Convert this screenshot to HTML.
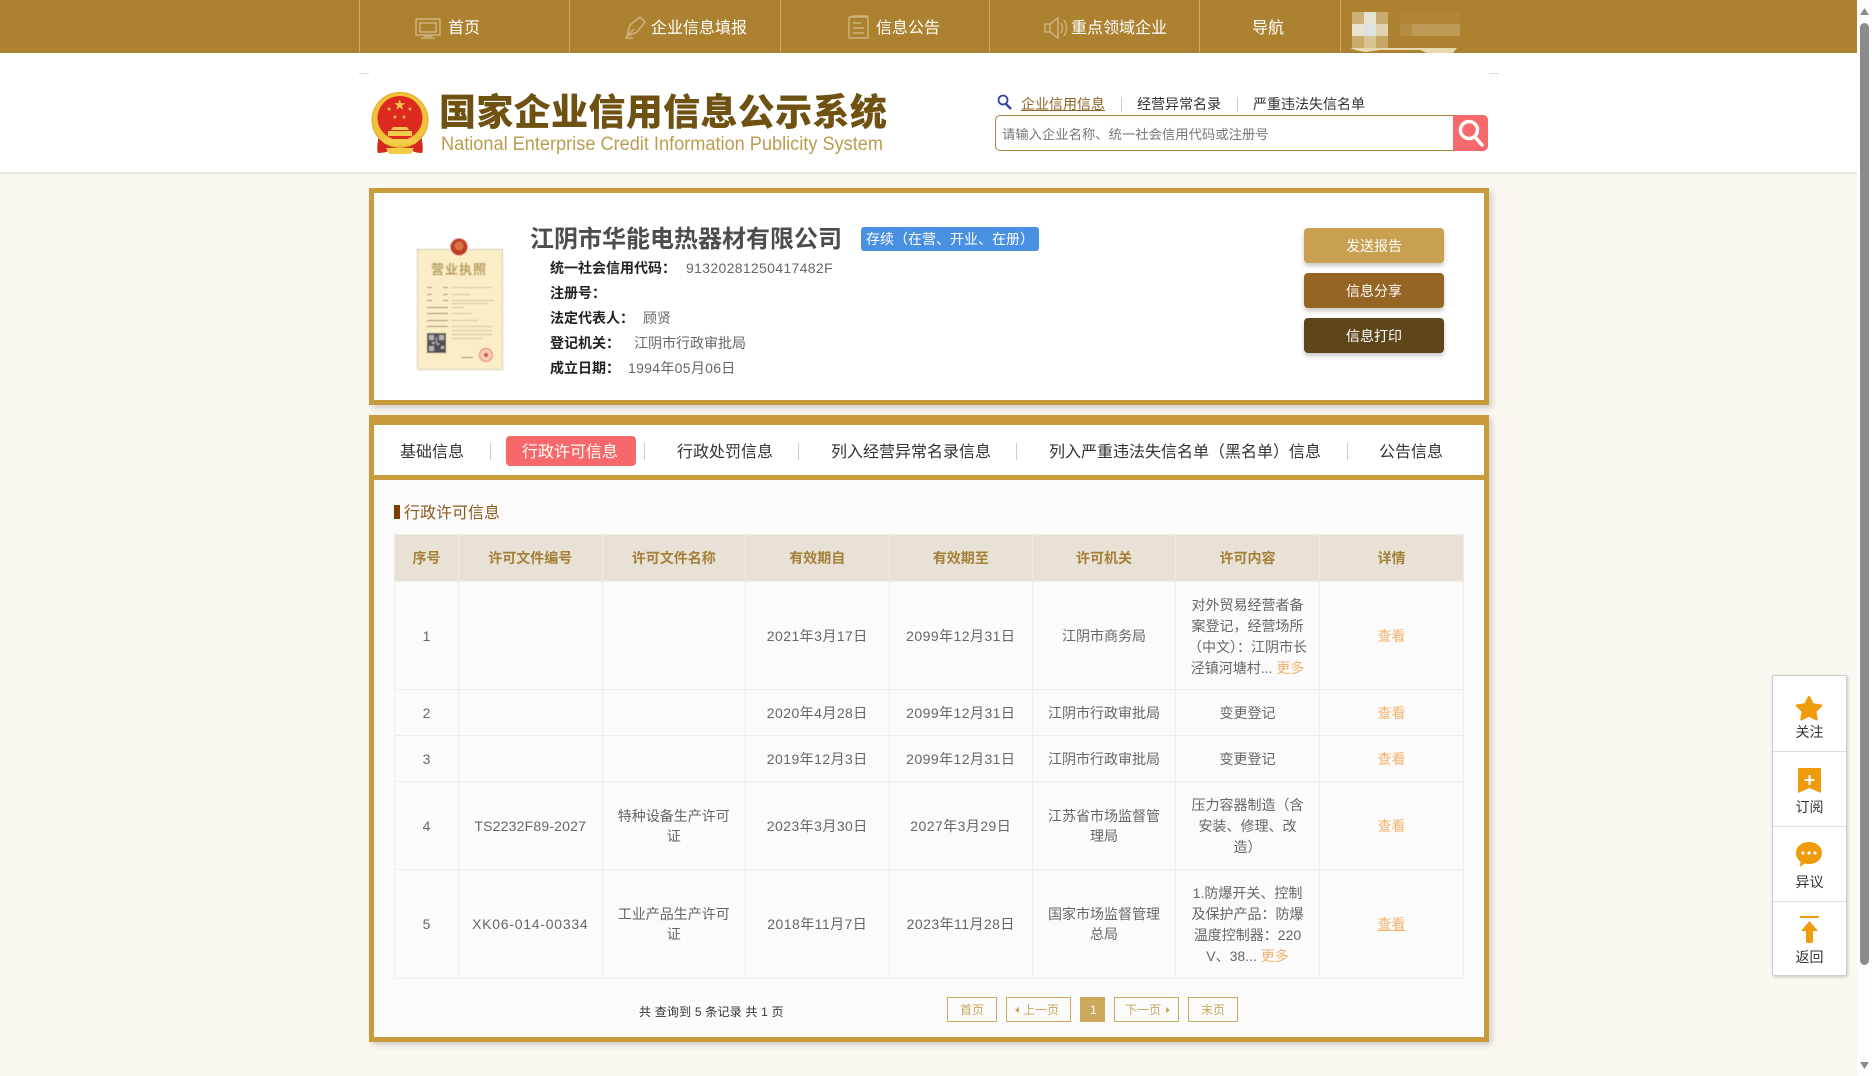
<!DOCTYPE html>
<html lang="zh-CN"><head><meta charset="utf-8"><title>国家企业信用信息公示系统</title>
<style>
html,body{margin:0;padding:0;width:1872px;height:1076px;overflow:hidden;background:#fbf8f1}
body{position:relative;font-family:"Liberation Sans","Noto Sans CJK SC",sans-serif;font-size:14px;color:#666}
.t{position:absolute;white-space:nowrap;line-height:20px}
.a{position:absolute}
.nav{left:0;top:0;width:1857px;height:53px;background:#ac8130}
.nv{color:#fff;font-size:16px;top:19px}
.ns{top:0;width:1px;height:53px;background:#c9ab6a}
.hd{left:0;top:53px;width:1857px;height:119px;background:#fff;border-bottom:2px solid #e6e4e0}
.panel{box-sizing:border-box;border:5px solid #c89b3c;box-shadow:3px 3px 6px rgba(0,0,0,.18)}
.btn{left:1304px;width:140px;height:35px;line-height:37px;border-radius:4px;color:#fff;text-align:center;box-shadow:0 3px 5px rgba(0,0,0,.22)}
.lb{left:550px;font-weight:700;color:#222}
.tab{font-size:16px;color:#333;top:443px}
.sp{width:1px;height:17px;top:443px;background:#ccc}
table{position:absolute;left:394px;top:534px;width:1069px;border-collapse:collapse;table-layout:fixed;background:#fbfbfb}
td,th{border:1px solid #eee;padding:0 12px;text-align:center;vertical-align:middle;line-height:20px;font-weight:400;color:#666}
th{background:#e8e2d6;color:#a47f36;font-weight:700;border-color:#f1ede5}
td div{line-height:21px;position:relative;top:1px}
.d{letter-spacing:.45px}
.o{color:#f4b26c}
.pg{box-sizing:border-box;top:997px;height:25px;line-height:25px;border:1px solid #cdaa5e;color:#c9a55c;font-size:12px;text-align:center;white-space:nowrap}
.sb{color:#333;width:75px;text-align:center;left:1772px}
</style></head><body>
<div class="a nav"></div>
<div class="a ns" style="left:359px"></div><div class="a ns" style="left:569px"></div><div class="a ns" style="left:780px"></div><div class="a ns" style="left:989px"></div><div class="a ns" style="left:1199px"></div><div class="a ns" style="left:1340px"></div>
<div class="t nv" style="left:448px">首页</div>
<div class="t nv" style="left:651px">企业信息填报</div>
<div class="t nv" style="left:876px">信息公告</div>
<div class="t nv" style="left:1071px">重点领域企业</div>
<div class="t nv" style="left:1252px">导航</div>

<div class="a" style="left:1352px;top:12px;width:12px;height:12px;background:#cbb07a"></div><div class="a" style="left:1364px;top:12px;width:12px;height:12px;background:#e8e2d0"></div><div class="a" style="left:1376px;top:12px;width:12px;height:12px;background:#c9ab6e"></div>
<div class="a" style="left:1352px;top:24px;width:12px;height:12px;background:#ebe3d0"></div><div class="a" style="left:1364px;top:24px;width:12px;height:12px;background:#dfe0e0"></div><div class="a" style="left:1376px;top:24px;width:12px;height:12px;background:#e3d2af"></div>
<div class="a" style="left:1352px;top:36px;width:12px;height:12px;background:#c9ab6e"></div><div class="a" style="left:1364px;top:36px;width:12px;height:12px;background:#d8c392"></div><div class="a" style="left:1376px;top:36px;width:12px;height:12px;background:#c6a665"></div>
<div class="a" style="left:1400px;top:12px;width:60px;height:12px;background:#b18736"></div>
<div class="a" style="left:1400px;top:24px;width:12px;height:12px;background:#b58d42"></div><div class="a" style="left:1412px;top:24px;width:48px;height:12px;background:#bd9a55"></div>

<div class="a hd"></div>
<div class="a" style="left:359px;top:73px;width:10px;height:1px;background:#ddd"></div>
<div class="a" style="left:1489px;top:73px;width:10px;height:1px;background:#ddd"></div>

<div class="t" style="left:439px;top:93px;line-height:40px;font-size:37px;font-weight:900;letter-spacing:.35px;color:#6f5212">国家企业信用信息公示系统</div>

<div class="t" style="left:1021px;top:94px;color:#8a6426;text-decoration:underline">企业信用信息</div>
<div class="a" style="left:1121px;top:97px;width:1px;height:15px;background:#ccc"></div>
<div class="t" style="left:1137px;top:94px;color:#333">经营异常名录</div>
<div class="a" style="left:1237px;top:97px;width:1px;height:15px;background:#ccc"></div>
<div class="t" style="left:1253px;top:94px;color:#333">严重违法失信名单</div>
<div class="a" style="left:995px;top:115px;width:493px;height:36px;box-sizing:border-box;border:1px solid #a98235;border-radius:5px;background:#fff"></div>
<div class="t" style="left:1002px;top:125px;font-size:13.33px;color:#777">请输入企业名称、统一社会信用代码或注册号</div>
<div class="a" style="left:1453px;top:115px;width:35px;height:36px;background:#f7696b;border-radius:0 5px 5px 0"></div>

<div class="a panel" style="left:369px;top:188px;width:1120px;height:217px;background:#fff"></div>
<div class="t" style="left:530px;top:225px;line-height:30px;font-size:24px;font-weight:700;color:#4d4d4d">江阴市华能电热器材有限公司</div>
<div class="a" style="left:861px;top:227px;width:178px;height:24px;background:#4a90e2;border-radius:3px"></div>
<div class="t" style="left:866px;top:229px;color:#fff">存续（在营、开业、在册）</div>
<div class="t lb" style="top:258px">统一社会信用代码：</div><div class="t" style="left:686px;top:258px;letter-spacing:.33px">91320281250417482F</div>
<div class="t lb" style="top:283px">注册号：</div>
<div class="t lb" style="top:308px">法定代表人：</div><div class="t" style="left:643px;top:308px">顾贤</div>
<div class="t lb" style="top:333px">登记机关：</div><div class="t" style="left:634px;top:333px">江阴市行政审批局</div>
<div class="t lb" style="top:358px">成立日期：</div><div class="t" style="left:628px;top:358px;letter-spacing:.3px">1994年05月06日</div>

<div class="a btn" style="top:228px;background:#c99f50">发送报告</div>
<div class="a btn" style="top:273px;background:#956524">信息分享</div>
<div class="a btn" style="top:318px;background:#5f451a">信息打印</div>

<div class="a panel" style="left:369px;top:415px;width:1120px;height:627px;border-top-width:10px;background:#fbfbfb"></div>
<div class="a" style="left:374px;top:425px;width:1110px;height:50px;background:#fff"></div>
<div class="a" style="left:374px;top:475px;width:1110px;height:5px;background:#c89b3c"></div>
<div class="t tab" style="left:400px">基础信息</div><div class="a sp" style="left:490px"></div>
<div class="a" style="left:506px;top:436px;width:130px;height:30px;background:#f7686a;border-radius:4px"></div>
<div class="t tab" style="left:522px;color:#fff">行政许可信息</div><div class="a sp" style="left:644px"></div>
<div class="t tab" style="left:677px">行政处罚信息</div><div class="a sp" style="left:798px"></div>
<div class="t tab" style="left:831px">列入经营异常名录信息</div><div class="a sp" style="left:1016px"></div>
<div class="t tab" style="left:1049px">列入严重违法失信名单（黑名单）信息</div><div class="a sp" style="left:1347px"></div>
<div class="t tab" style="left:1379px">公告信息</div>

<div class="a" style="left:394px;top:505px;width:6px;height:14px;background:#7f3f00"></div>
<div class="t" style="left:404px;top:504px;font-size:16px;color:#8b5a1f">行政许可信息</div>

<table>
<colgroup><col style="width:64px"><col style="width:143.5px"><col style="width:143.5px"><col style="width:143.5px"><col style="width:143.5px"><col style="width:143px"><col style="width:144px"><col style="width:144px"></colgroup>
<tr style="height:47px"><th>序号</th><th>许可文件编号</th><th>许可文件名称</th><th>有效期自</th><th>有效期至</th><th>许可机关</th><th>许可内容</th><th>详情</th></tr>
<tr style="height:108px"><td>1</td><td></td><td></td><td class="d">2021年3月17日</td><td class="d">2099年12月31日</td><td>江阴市商务局</td><td><div>对外贸易经营者备<br>案登记，经营场所<br>（中文）：江阴市长<br>泾镇河塘村... <span class="o">更多</span></div></td><td class="o">查看</td></tr>
<tr style="height:46px"><td>2</td><td></td><td></td><td class="d">2020年4月28日</td><td class="d">2099年12月31日</td><td>江阴市行政审批局</td><td>变更登记</td><td class="o">查看</td></tr>
<tr style="height:46px"><td>3</td><td></td><td></td><td class="d">2019年12月3日</td><td class="d">2099年12月31日</td><td>江阴市行政审批局</td><td>变更登记</td><td class="o">查看</td></tr>
<tr style="height:88px"><td>4</td><td style="padding:0;letter-spacing:.2px">TS2232F89-2027</td><td>特种设备生产许可<br>证</td><td class="d">2023年3月30日</td><td class="d">2027年3月29日</td><td>江苏省市场监督管<br>理局</td><td><div>压力容器制造（含<br>安装、修理、改<br>造）</div></td><td class="o">查看</td></tr>
<tr style="height:109px"><td>5</td><td style="padding:0;letter-spacing:.75px">XK06-014-00334</td><td>工业产品生产许可<br>证</td><td class="d">2018年11月7日</td><td class="d">2023年11月28日</td><td>国家市场监督管理<br>总局</td><td><div>1.防爆开关、控制<br>及保护产品：防爆<br>温度控制器：220<br>V、38... <span class="o">更多</span></div></td><td class="o" style="text-decoration:underline">查看</td></tr>
</table>

<div class="t" style="left:639px;top:1002px;font-size:12px;letter-spacing:.2px;color:#333">共 查询到 5 条记录 共 1 页</div>
<div class="a pg" style="left:947px;width:50px">首页</div>
<div class="a pg" style="left:1006px;width:65px;text-align:left;padding-left:16px">上一页</div>
<div class="a pg" style="left:1080px;width:25px;background:#cda95c;color:#fff;padding-left:2px">1</div>
<div class="a pg" style="left:1114px;width:65px;text-align:left;padding-left:10px">下一页</div>
<div class="a pg" style="left:1188px;width:50px">末页</div>

<div class="a" style="left:1772px;top:675px;width:75px;height:301px;box-sizing:border-box;background:#fff;border:1px solid #ccc;border-radius:2px;box-shadow:1px 1px 3px rgba(0,0,0,.2)"></div>
<div class="a" style="left:1773px;top:751px;width:73px;height:1px;background:#ddd"></div>
<div class="a" style="left:1773px;top:826px;width:73px;height:1px;background:#ddd"></div>
<div class="a" style="left:1773px;top:901px;width:73px;height:1px;background:#ddd"></div>
<div class="t sb" style="top:722px">关注</div>
<div class="t sb" style="top:797px">订阅</div>
<div class="t sb" style="top:872px">异议</div>
<div class="t sb" style="top:947px">返回</div>

<div class="a" style="left:1857px;top:0;width:15px;height:1076px;background:#fdfdfd"></div>
<div class="a" style="left:1860px;top:23px;width:9px;height:942px;background:#8b8b8b;border-radius:5px"></div>

<svg class="a" style="left:0;top:0" width="1872" height="1076" viewBox="0 0 1872 1076">
<defs><polygon id="s" points="0,-1 .2245,-.309 .951,-.309 .363,.118 .588,.809 0,.382 -.588,.809 -.363,.118 -.951,-.309 -.2245,-.309"/><filter id="b" x="-5%" y="-5%" width="110%" height="110%"><feGaussianBlur stdDeviation=".45"/></filter></defs>
<!-- nav icons -->
<g fill="none" stroke="#cdb27a" stroke-width="1.5">
<rect x="416" y="19" width="24" height="16" rx="1"/><rect x="420" y="23" width="16" height="9"/><path d="M424 36h8M421 38h14"/>
<path d="M627 36l3-11 10-8 5 5-8 10z M627 36l7-7M640 17l5 5M625 38h8"/>
<rect x="849" y="17" width="19" height="21" rx="1"/><path d="M853 17v-1h15M853 23h8M853 28h11M853 33h11"/>
<path d="M1045 24h5l8-6v20l-8-6h-5zM1050 24v8M1061 23q3 5 0 10M1064 20q5 8 0 16"/>
</g>
<path d="M1350 48h107l-4 5h-26l-7-3h-40l-14 2q-10-1-16-4z" fill="#e8d8b0"/>
<!-- emblem -->
<path d="M379 135q-3 14-1 18 10 0 14-5l8 3 8-3q5 5 14 5 2-4-1-18z" fill="#d22a1e"/>
<ellipse cx="400" cy="120" rx="28" ry="27.5" fill="#f2c23a" stroke="#dca72a"/>
<ellipse cx="400" cy="118" rx="22.500" ry="22" fill="#dc2a20"/>
<g fill="#f5cc4a"><use href="#s" transform="translate(399.7 105) scale(5.8)"/><use href="#s" transform="translate(389 109) scale(2.4)"/><use href="#s" transform="translate(410 109) scale(2.4)"/><use href="#s" transform="translate(395 117) scale(2.4)"/><use href="#s" transform="translate(404 117) scale(2.4)"/>
<path d="M393 127h14l2 3h-18zM388 131h24v5h-24zM381 139h38l-4 5q-6-2-10 2l-5-2-5 2q-4-4-10-2z"/><path d="M386 148h28l-3 6h-22z"/></g>
<!-- search -->
<g fill="none" stroke="#2f4a9a" stroke-width="1.800"><circle cx="1003" cy="100" r="4.500"/><path d="M1006 104l5 5" stroke-width="2.500"/></g>
<g fill="none" stroke="#fff" stroke-width="3.500"><circle cx="1469" cy="130" r="8.500"/><path d="M1475 137l7 8" stroke-linecap="round"/></g>
<!-- licence -->
<g filter="url(#b)">
<rect x="417.5" y="249.5" width="85" height="120" fill="#fbeec6" stroke="#cfcdb8" stroke-width="1.500" stroke-dasharray="2 1"/>
<circle cx="459" cy="247" r="8.500" fill="#c23a28"/><circle cx="459" cy="246" r="4.500" fill="#d9764a"/>
<text x="459" y="274" font-size="13" font-weight="700" fill="#b49a55" text-anchor="middle" font-family="Liberation Sans,Noto Sans CJK SC,sans-serif" letter-spacing="1">营业执照</text>
<g fill="#8f8263"><rect x="427" y="287" width="5" height="1"/><rect x="443" y="287" width="5" height="1"/><rect x="427" y="294" width="5" height="1"/><rect x="443" y="294" width="5" height="1"/><rect x="427" y="300" width="5" height="1"/><rect x="443" y="300" width="5" height="1"/><rect x="427" y="307" width="21" height="1"/><rect x="427" y="313" width="21" height="1"/><rect x="427" y="320" width="21" height="1"/><rect x="427" y="326" width="21" height="1"/></g>
<g fill="#cfc39c"><rect x="452" y="287" width="40" height="1"/><rect x="452" y="294" width="18" height="1"/><rect x="452" y="300" width="42" height="1"/><rect x="452" y="303" width="36" height="1"/><rect x="452" y="307" width="12" height="1"/><rect x="452" y="313" width="20" height="1"/><rect x="452" y="320" width="26" height="1"/><rect x="452" y="326" width="40" height="1"/><rect x="452" y="330" width="40" height="1"/><rect x="452" y="334" width="40" height="1"/><rect x="452" y="338" width="30" height="1"/></g>
<rect x="427" y="333" width="19" height="20" fill="#4f4f4f"/><path d="M429 335h5v5h-5zM439 335h5v5h-5zM429 346h5v5h-5zM437 343h2v2h-2zM441 346h3v3h-3zM436 337h1v6h-1zM432 342h3v2h-3z" fill="#b5b5b5"/>
<circle cx="486" cy="355" r="6.500" fill="#f5cdb4" stroke="#e2796a"/><circle cx="486" cy="355" r="2" fill="#d9402e"/>
<rect x="461" y="357" width="12" height="1" fill="#8f8263"/>
</g>
<!-- sub title -->
<text x="441" y="150" font-size="19" fill="#ba9c50" font-family="Liberation Sans,sans-serif" textLength="442" lengthAdjust="spacingAndGlyphs">National Enterprise Credit Information Publicity System</text>
<!-- pagination arrows -->
<path d="M1019 1007v6l-4-3zM1166 1007v6l4-3z" fill="#c9a55c"/>
<!-- side icons -->
<g fill="#ee9b0c">
<path d="M1809 696l4.100 8 9 1.200-6.300 6.300 1.500 8.800-8.300-4.200-8.300 4.200 1.500-8.800-6.300-6.300 9-1.200z" stroke="#ee9b0c" stroke-width="2.500" stroke-linejoin="round" transform="translate(1809 709) scale(.92) translate(-1809 -709)"/>
<path d="M1798 769q0-1 1-1h21q1 0 1 1v24l-11.500-5-11.500 5z"/>
<path d="M1809 842c7.500 0 13 4.800 13 11s-5.500 11-13 11c-1.500 0-3-.2-4.300-.6L1800 867l.5-5.400c-2.700-2-4.500-5-4.500-8.600 0-6.200 5.500-11 13-11z"/>
<rect x="1800" y="916" width="19" height="2"/>
<path d="M1809.500 921l8.500 10h-5v10q0 2-2 2h-3q-2 0-2-2v-10h-5z"/>
</g>
<path d="M1809.500 775v10M1804.500 780h10" stroke="#fff" stroke-width="2" fill="none"/>
<g fill="#fff"><circle cx="1803" cy="853" r="1.600"/><circle cx="1809" cy="853" r="1.600"/><circle cx="1815" cy="853" r="1.600"/></g>
<!-- scrollbar arrows -->
<path d="M1864.500 8l4.500 7h-9z M1860 1062h9l-4.500 7z" fill="#8b8b8b"/>
</svg>
</body></html>
